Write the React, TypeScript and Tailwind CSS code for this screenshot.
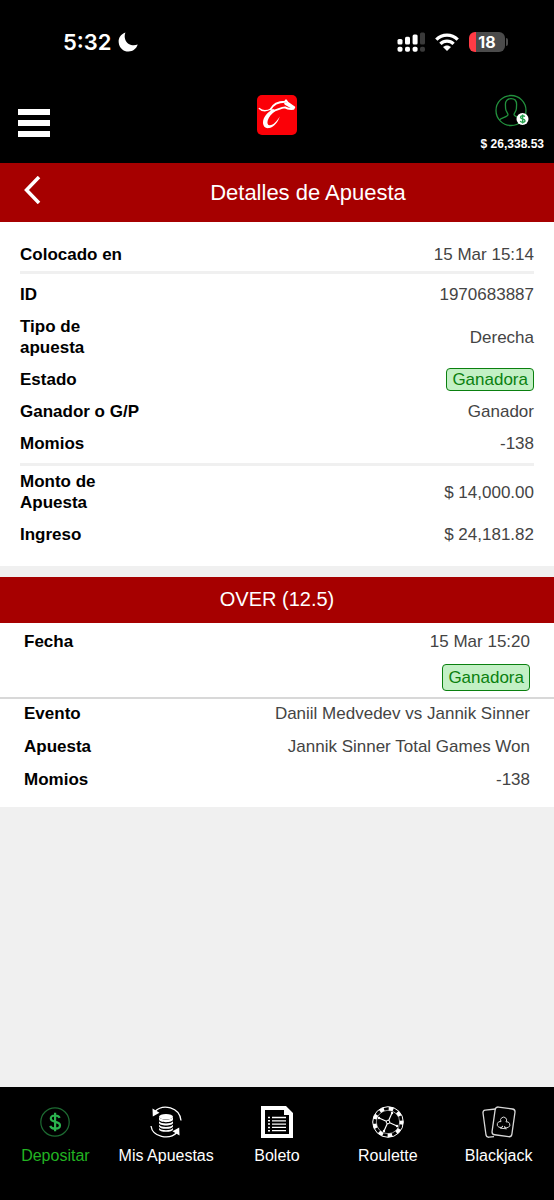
import type { ReactNode } from 'react'

type Row = { label: string; value: string; won?: boolean }

const betRows: Row[] = [
  { label: 'ID', value: '1970683887' },
  { label: 'Tipo de apuesta', value: 'Derecha' },
  { label: 'Estado', value: 'Ganadora', won: true },
  { label: 'Ganador o G/P', value: 'Ganador' },
  { label: 'Momios', value: '-138' }
]

const amountRows: Row[] = [
  { label: 'Monto de Apuesta', value: '$ 14,000.00' },
  { label: 'Ingreso', value: '$ 24,181.82' }
]

const legRows: Row[] = [
  { label: 'Evento', value: 'Daniil Medvedev vs Jannik Sinner' },
  { label: 'Apuesta', value: 'Jannik Sinner Total Games Won' },
  { label: 'Momios', value: '-138' }
]

const StatusBar = () => (
  <div className="flex h-[83px] items-center justify-between pl-[63px] pr-[46px]">
    <div className="flex items-center gap-1.5 font-['Inter',sans-serif] text-[22px] font-semibold leading-7">
      <span>5:32</span>
      <svg width="20" height="20" viewBox="0 0 20 20" fill="#fff" aria-hidden="true">
        <path d="M7.400 0.500C2.600 2.200 0.300 6.200 0.700 10.400C1.200 15.800 5.400 19.500 10.500 19.500C15 19.500 18.300 17 19.700 12.600C14.500 14.600 9.300 12.400 7.400 8C6.400 5.500 6.500 2.800 7.400 0.500Z" />
      </svg>
    </div>
    <div className="flex items-center gap-2.5">
      <svg width="28" height="20" viewBox="0 0 28 20" fill="#fff" aria-hidden="true">
        <rect x="0.500" y="7" width="5" height="5.500" rx="1.500" />
        <rect x="8" y="4.800" width="5" height="7.700" rx="1.500" />
        <rect x="15.600" y="2.500" width="5" height="10" rx="1.500" />
        <rect x="23" y="0.500" width="5" height="12" rx="1.500" fill="#3a3a3a" />
        <rect x="0.500" y="14.700" width="5" height="5" rx="1.800" />
        <rect x="8" y="14.700" width="5" height="5" rx="1.800" />
        <rect x="15.600" y="14.700" width="5" height="5" rx="1.800" />
        <rect x="23" y="14.700" width="5" height="5" rx="1.800" fill="#3a3a3a" />
      </svg>
      <svg width="24" height="20" viewBox="0 0 24 20" fill="none" stroke="#fff" strokeWidth="3.300" aria-hidden="true">
        <path d="M1.300 7.600C7.400 1.600 16.600 1.600 22.700 7.600" />
        <path d="M5.400 11.900C9.200 8.200 14.800 8.200 18.600 11.900" />
        <path d="M12 19L8 15C10.200 12.900 13.800 12.900 16 15Z" fill="#fff" stroke="none" />
      </svg>
      <div className="flex items-center gap-px">
        <div className="flex h-5 w-9 items-center justify-center rounded-md bg-linear-to-r from-[#ff3b45] from-20% to-[#4b4b4b] to-20% font-['Inter',sans-serif] text-base font-bold leading-5">
          18
        </div>
        <div className="h-2 w-0.5 rounded-r-full bg-[#4b4b4b]" />
      </div>
    </div>
  </div>
)

const Logo = () => (
  <svg width="40" height="40" viewBox="0 0 40 40" role="img" aria-label="Caliente">
    <rect width="40" height="40" rx="5" fill="#fb0007" />
    <g fill="none" stroke="#fff" strokeLinecap="round" strokeLinejoin="round">
      <path d="M2.300 13.400C5 16 9.500 16.300 14 14" strokeWidth="1.400" />
      <path d="M13.500 14.500C16 9.500 20 6.800 28 6.800L29 5.300L30.500 7.600L37.300 12.200L36.500 13.800C33 14.200 30.500 14 28 12.400C23 12.600 20.500 15.300 15 15.800" strokeWidth="1.900" />
      <path d="M28.500 8.500L35.500 12.500" strokeWidth="2.600" />
    </g>
    <path d="M16 14C10 17.500 6 22.500 6 27.500C6 31.500 8.700 33.800 12.300 33C17.500 31.800 21 27 22.800 21.500C19.800 26 16.500 30.300 12.800 30.300C8.500 30.300 10 21.500 18.500 16Z" fill="#fff" />
  </svg>
)

const AccountIcon = () => (
  <svg width="34" height="34" viewBox="0 0 34 34" fill="none" stroke="#22913d" strokeWidth="1.300" aria-hidden="true">
    <circle cx="16" cy="16.500" r="15" />
    <path d="M4.500 26C6 23.500 13 23 13 20.800C13 19 10.700 17.500 10.600 14.500L10.400 10.500C10.400 6.800 12.500 4.700 16 4.700S21.600 6.800 21.600 10.500L21.400 14.500C21.300 17.500 19 19 19 20.800C19 22.500 24 23 27 26" />
    <circle cx="27.500" cy="25" r="6" fill="#fff" stroke="none" />
    <path d="M29.800 22.800C29 21.300 25.500 21.300 25.500 23.300C25.500 25.600 30 24.400 30 26.800C30 28.800 26 28.700 25.200 27M27.600 20.500V29.600" stroke="#21a04a" />
  </svg>
)

const DepositIcon = () => (
  <svg width="32" height="32" viewBox="0 0 32 32" fill="none" stroke="#2bb34e" aria-hidden="true">
    <circle cx="16" cy="16" r="14.200" stroke="#1d6b32" strokeWidth="1.200" />
    <path d="M20.600 11.800C19.500 8.600 11.800 8.600 11.800 12.500C11.800 17 21 14.600 21 19.300C21 23.700 12.500 23.700 11.200 19.800M16.100 6.800V25.200" strokeWidth="2.200" />
  </svg>
)

const BetsIcon = () => (
  <svg width="32" height="32" viewBox="0 0 32 32" fill="none" stroke="#fff" strokeWidth="1.300" aria-hidden="true">
    <path d="M5 5.500C13-2.500 29.500 1 31 14.500M27 26.500C19 34.500 2.500 31 1 20" />
    <path d="M2.500 2.500L2.800 10.500L9.500 6.800ZM29.500 29.500L29.200 21.500L22.500 25.200Z" fill="#fff" stroke="none" />
    <ellipse cx="16" cy="10.800" rx="7" ry="2.800" fill="#fff" stroke="none" />
    <path d="M9 11V13.500C9 17 23 17 23 13.500V11C21 14.500 11 14.500 9 11ZM9 15.300V17C9 20.300 23 20.300 23 17V15.300C21 18.300 11 18.300 9 15.300ZM9 18.700V20.300C9 23.700 23 23.700 23 20.300V18.700C21 21.700 11 21.700 9 18.700ZM9 22V23.200C9 26.700 23 26.700 23 23.200V22C21 25 11 25 9 22Z" fill="#fff" stroke="none" />
  </svg>
)

const SlipIcon = () => (
  <svg width="32" height="32" viewBox="0 0 32 32" fill="none" stroke="#fff" aria-hidden="true">
    <path d="M0 0H25L32 7V32H0ZM4 4V28H28V9H23V4Z" fill="#fff" fillRule="evenodd" stroke="none" />
    <path d="M11 11.500H25M11 14.800H25M11 18.100H25M11 21.400H25M11 24.700H25" strokeWidth="1.300" />
    <path d="M7 11.500H9M7 14.800H9M7 18.100H9M7 21.400H9M7 24.700H9" strokeWidth="1.500" />
  </svg>
)

const RouletteIcon = () => (
  <svg width="32" height="32" viewBox="0 0 32 32" fill="none" stroke="#fff" aria-hidden="true">
    <circle cx="16" cy="16" r="15.300" strokeWidth="1" />
    <circle cx="16" cy="16" r="13.400" strokeWidth="3.600" strokeDasharray="4.600 4.755" strokeDashoffset="2" />
    <circle cx="16" cy="16" r="11.700" strokeWidth="0.600" />
    <path d="M20 7L12 25M7 12L25 20" strokeWidth="1.200" />
    <circle cx="16" cy="16" r="1.800" fill="#000" strokeWidth="1" />
    <g fill="#fff" stroke="none">
      <circle cx="20" cy="7" r="1.200" />
      <circle cx="12" cy="25" r="1.200" />
      <circle cx="7" cy="12" r="1.200" />
      <circle cx="25" cy="20" r="1.200" />
    </g>
  </svg>
)

const BlackjackIcon = () => (
  <svg width="34" height="32" viewBox="0 0 34 32" fill="none" stroke="#d8d8d8" strokeWidth="1.300" aria-hidden="true">
    <path d="M13.500 3L3.200 4.200Q0.800 4.600 1 7L4 29Q4.500 31.500 7 31.200L12 30.600" />
    <rect x="11.500" y="1.800" width="20" height="28" rx="3" transform="rotate(8 21 16)" />
    <path d="M19 15.600A3 3 0 1 1 24 15.900A3 3 0 1 1 22.400 20.500Q22.400 22.300 24.400 22.800L18.400 22.200Q20.400 21.700 20.800 20A3 3 0 1 1 19 15.600Z" strokeWidth="1" />
  </svg>
)

const navItems: { label: string; icon: ReactNode; active?: boolean }[] = [
  { label: 'Depositar', icon: <DepositIcon />, active: true },
  { label: 'Mis Apuestas', icon: <BetsIcon /> },
  { label: 'Boleto', icon: <SlipIcon /> },
  { label: 'Roulette', icon: <RouletteIcon /> },
  { label: 'Blackjack', icon: <BlackjackIcon /> }
]

const WonBadge = ({ tall = false }: { tall?: boolean }) => (
  <span className={`${tall ? 'py-0.5' : '-my-px'} inline-block rounded border border-[#0a800f] bg-[#c3f0c5] px-[5px] text-[#0a800f]`}>
    Ganadora
  </span>
)

const DetailRow = ({ label, value, won }: Row) => (
  <div className="flex items-center justify-between">
    <dt className="w-[124px] font-bold text-black">{label}</dt>
    <dd className="flex text-right">{won ? <WonBadge /> : value}</dd>
  </div>
)

const App = () => {
  return (
    <div className="flex min-h-screen flex-col bg-[#f0f0f0] font-['Liberation_Sans',sans-serif] text-[17px] leading-[21px] text-[#444]">
      <header className="bg-black text-white">
        <StatusBar />
        <div className="grid h-20 grid-cols-3 items-center px-2.5">
          <button type="button" aria-label="Menú" className="ml-2 flex w-8 flex-col gap-[5px]">
            <span className="h-1.5 bg-white" />
            <span className="h-1.5 bg-white" />
            <span className="h-1.5 bg-white" />
          </button>
          <a href="#inicio" className="mt-3 self-start justify-self-center">
            <Logo />
          </a>
          <a href="#cuenta" className="flex flex-col items-center gap-2 justify-self-end text-xs font-bold leading-4">
            <AccountIcon />
            $ 26,338.53
          </a>
        </div>
      </header>

      <div className="grid h-[59px] grid-cols-[62px_1fr] items-center bg-[#a60000] text-white">
        <button type="button" aria-label="Volver" className="pb-1.5 pl-6">
          <svg width="18" height="28" viewBox="0 0 18 28" fill="none" stroke="#fff" strokeWidth="3.500" aria-hidden="true">
            <path d="M15 1L2.500 14L15 27" />
          </svg>
        </button>
        <h1 className="text-center text-[22px]">Detalles de Apuesta</h1>
      </div>

      <main className="flex-1">
        <section className="bg-white px-5 pb-[21px] pt-[22px]">
          <dl className="pb-1.5">
            <DetailRow label="Colocado en" value="15 Mar 15:14" />
          </dl>
          <dl className="flex flex-col gap-[11px] border-y-3 border-[#f0f0f0] pb-[9px] pt-2.5">
            {betRows.map((row) => (
              <DetailRow key={row.label} {...row} />
            ))}
          </dl>
          <dl className="flex flex-col gap-[11px] pt-[5px]">
            {amountRows.map((row) => (
              <DetailRow key={row.label} {...row} />
            ))}
          </dl>
        </section>

        <section className="mt-[11px] bg-white">
          <h2 className="bg-[#a60000] pb-[13px] pt-3 text-center text-xl leading-[21px] text-white">OVER (12.5)</h2>
          <dl className="border-b-2 border-[#d8d8d8] px-6 pb-1.5 pt-2">
            <div className="flex justify-between">
              <dt className="font-bold text-black">Fecha</dt>
              <dd className="flex flex-col items-end gap-3">
                15 Mar 15:20
                <WonBadge tall />
              </dd>
            </div>
          </dl>
          <dl className="flex flex-col gap-3 px-6 pb-[17px] pt-1">
            {legRows.map((row) => (
              <DetailRow key={row.label} {...row} />
            ))}
          </dl>
        </section>
      </main>

      <nav className="grid grid-cols-5 bg-black pb-[34px] pt-[19px] text-base leading-5 text-white">
        {navItems.map((item) => (
          <a
            key={item.label}
            href={`#${item.label}`}
            className={`flex flex-col items-center gap-2 ${item.active ? 'text-[#22b322]' : ''}`}
          >
            {item.icon}
            {item.label}
          </a>
        ))}
      </nav>
    </div>
  )
}

export default App
